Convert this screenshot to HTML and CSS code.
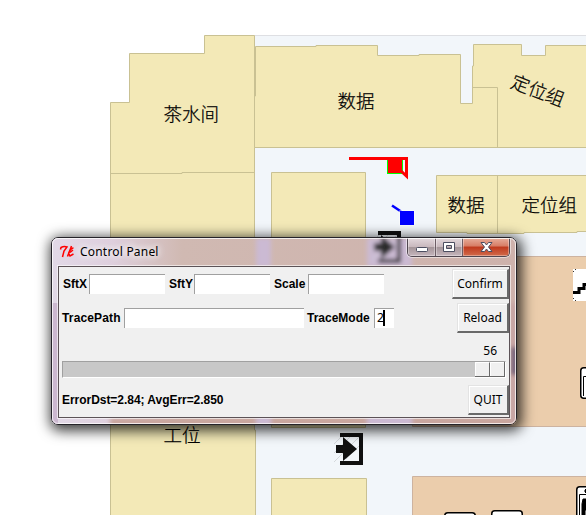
FILE: index.html
```html
<!DOCTYPE html>
<html lang="zh">
<head>
<meta charset="utf-8">
<title>Control Panel</title>
<link rel="stylesheet" href="styles.css">
</head>
<body>
<svg class="map" viewBox="0 0 586 515" width="586" height="515">
  <path class="hall" d="M254.500 35.500H590V520H254.500Z"/>
  <g class="room">
    <path d="M110.500 520V102.500H129.500V53.500H204.500V35.500H254.500V430H255.500V520Z"/>
    <path d="M110.500 173.500H182V172.500H254.500" fill="none"/>
    <path d="M254.500 147.500V96H255.500V46.500H316V45.500H377.500V55.500H419V54.500H460.500V103.500H472.500V66H473.500V44.500H521.500V55.500H545.500V45.500H590V147.500Z"/>
    <path d="M472.500 87.500H497.500V147.500" fill="none"/>
    <path d="M271.500 172.500H365.500V427.500H271.500ZM271.500 478.500H366.500V520H271.500Z"/>
    <path d="M436.500 175.500H590V231.500H577V232.500H524V233.500H467V232.500H436.500ZM497.500 175.500V233"/>
  </g>
  <path class="office" d="M412.500 256.500H590V426.500H412.500ZM412.500 476.500H590V520H412.500Z"/>
  <g class="names">
    <text x="163.500" y="120.500">茶水间</text>
    <text x="337.500" y="107.500">数据</text>
    <text x="447.500" y="211.500">数据</text>
    <text x="521.500" y="211.500">定位组</text>
    <text transform="translate(509.500 87) rotate(21)">定位组</text>
    <text x="163.500" y="441.500">工位</text>
  </g>
  <path d="M387 159H403V174H387Z" fill="#0f0"/>
  <path d="M388 159H402V173H388Z" fill="red"/>
  <path class="trace-red" d="M349 158.500H406.500V176L401 171"/>
  <path d="M392 205.500L401 211.500" stroke="#00f" stroke-width="2.500"/>
  <path d="M399.500 210.500H414.500V225.500H399.500Z" fill="#fff"/>
  <path d="M400 211H414V225H400Z" fill="#00f"/>
  <g id="door">
    <path d="M334 444L345 433M334 453L354 433M334 462L362 434M346 459L362 443" stroke="#d5d9dc"/>
    <path d="M340 433H363V465H340V461H359V437H340Z" fill="#101010"/>
    <path d="M336 445H343V437L357 449L343 461V453H336Z" fill="#101010"/>
  </g>
  <use href="#door" x="38" y="-202"/>
  <g class="fixture">
    <path d="M573 269H590V301H573Z" stroke="none"/>
    <path d="M575.500 269V270M573 271.500H574M573 298.500H574M575.500 300V301" stroke="#333"/>
    <path d="M573 292.500H579V288.500H584V284.500H590" fill="none" stroke-width="3"/>
    <rect x="580.750" y="367.750" width="20" height="30.500" rx="3"/>
    <path d="M590 376.500H583.500V396"/>
    <rect x="576.750" y="486.750" width="30" height="40" rx="3"/>
    <path d="M590 494.500H579.500V520"/>
    <path d="M584 491H590M585.500 489V493M583 499H587V510H585V516H582V504Z" fill="#000"/>
    <rect x="444.750" y="512.750" width="30.500" height="20" rx="3"/>
    <rect x="491.750" y="510.750" width="30.500" height="20" rx="3"/>
  </g>
</svg>
<main class="window">
  <svg class="glass" width="464" height="186" viewBox="52 238 464 186">
    <defs>
      <linearGradient id="g" x2="1"><stop stop-color="#e2d9e7"/><stop offset=".13" stop-color="#decfdd"/><stop offset=".28" stop-color="#d0b9b2"/><stop offset="1" stop-color="#ceb2ac"/></linearGradient>
      <filter id="b"><feGaussianBlur stdDeviation="2.200"/></filter>
    </defs>
    <path d="M52 238H516V424H52Z" fill="url(#g)"/>
    <g filter="url(#b)"><path d="M256 238H271V267H256ZM367 238H412V267H367Z" fill="#cbbad3"/><path d="M110 418H516V426H110Z" fill="#c8a49c"/><path d="M256 416H271V426H256ZM367 416H412V426H367Z" fill="#cbbad3"/><path d="M510 303H518V426H510Z" fill="#c7a5a4"/><path d="M511 347H518V375H511Z" fill="#76647b"/><use href="#door" x="38" y="-202" opacity=".85"/></g>
    <path d="M52 303H58V424H52Z" fill="#ccb8d0"/>
  </svg>
  <header class="titlebar">
    <svg class="tk" width="16" height="16" viewBox="0 0 16 16"><path d="M1.500 5.500L2 3.500Q5 2 8 3L5 7L3.500 13M12.500 2L8.500 12.500M14.500 4Q12 4 9.500 9M9.500 9L11 12L14.500 10M14 6L11 8.500" fill="none" stroke="#f00" stroke-width="1.500"/></svg>
    <span class="title">Control Panel</span>
    <div class="controls">
      <span><svg width="27" height="18" viewBox="0 0 27 18"><rect class="glyph" x="8.500" y="9.500" width="11" height="4" rx="1"/></svg></span>
      <span><svg width="26" height="18" viewBox="0 0 26 18"><path class="glyph" fill-rule="evenodd" d="M7.500 4.500H18.500V13.500H7.500ZM10.500 7.500V10.500H15.500V7.500Z"/></svg></span>
      <span class="close"><svg width="46" height="18" viewBox="0 0 46 18"><path class="glyph" d="M18 4.500H21.500L23.500 7L25.500 4.500H29L25.500 9L29 13.500H25.500L23.500 11L21.500 13.500H18L21.500 9Z"/></svg></span>
    </div>
  </header>
  <section class="client">
    <div class="row first">
      <label>SftX</label><i class="entry short"></i><label>SftY</label><i class="entry short"></i><label>Scale</label><i class="entry short"></i>
      <button class="confirm">Confirm</button>
    </div>
    <div class="row second">
      <label class="path">TracePath</label><i class="entry long"></i><label>TraceMode</label><i class="entry mode">2<b></b></i>
      <button class="reload">Reload</button>
    </div>
    <div class="value">56</div>
    <div class="slider"><i class="thumb"><b></b><b></b></i></div>
    <div class="row last"><label>ErrorDst=2.84; AvgErr=2.850</label><button class="quit">QUIT</button></div>
  </section>
</main>
</body>
</html>
```
FILE: styles.css
```css
* { box-sizing: border-box; }
body { margin: 0; width: 586px; height: 515px; overflow: hidden; position: relative; background: #fff; }
.map { display: block; }
.hall { fill: #f2f6fa; stroke: #dedfe3; }
.room { fill: #f3e9b7; stroke: #c9c193; }
.office { fill: #ebcdac; stroke: #cdb3a0; }
.names { font: 18.500px "Noto Sans CJK SC", sans-serif; font-weight: 300; fill: #000; stroke: #000; stroke-width: .25; }
.trace-red { fill: none; stroke: red; stroke-width: 3; }
.fixture { fill: #fff; stroke: #000; }
.fixture rect { stroke-width: 1.500; }
.window { position: absolute; left: 51px; top: 237px; width: 466px; height: 188px; border: 1px solid #252329; border-radius: 7px; box-shadow: 2px 3px 13px 3px rgba(0,0,0,.75); overflow: hidden; }
.window::after { content: ""; position: absolute; inset: 0; border: 1px solid rgba(255,255,255,.75); border-radius: 6px; pointer-events: none; }
.glass { position: absolute; inset: 0; }
.titlebar { position: relative; height: 28px; display: flex; align-items: flex-start; padding-left: 7px; }
.tk { margin-top: 6px; }
.title { margin: 5px 0 0 5px; font: 12px/18px "Noto Sans", sans-serif; letter-spacing: .2px; color: #000; text-shadow: 0 0 6px #fff, 0 0 9px #fff, 0 0 12px rgba(255,255,255,.8); }
.controls { margin: 0 6px 0 auto; display: flex; height: 19px; border: 1px solid #514750; border-top: 0; border-radius: 0 0 5px 5px; overflow: hidden; box-shadow: 0 0 0 1px rgba(255,255,255,.5); }
.controls span { height: 18px; background: linear-gradient(#e3d8dc, #c9b9be 48%, #a39498 50%, #c5b5bc); border-right: 1px solid #6d5d65; box-shadow: inset 0 0 0 1px rgba(255,255,255,.35); }
.controls svg { display: block; }
.controls .close { background: linear-gradient(#e7ae9c, #d77d65 45%, #bf391d 50%, #d26b4b); border: 0; }
.glyph { fill: #fff; stroke: #4c4e61; }
.client { position: relative; margin-left: 6px; width: 452px; height: 152px; background: #f0f0f0; border: 1px solid #5c5357; box-shadow: 0 0 0 1px rgba(255,255,255,.6); display: flex; flex-direction: column; }
.row { display: flex; align-items: center; }
label { font: bold 12px/16px "Liberation Sans", sans-serif; white-space: nowrap; color: #000; }
.entry { display: block; height: 20px; background: #fff; border: solid #a0a0a0; border-width: 1px 0 0 1px; font: 12px/18px "Noto Sans", sans-serif; }
.short { width: 76px; }
.first { height: 34px; padding-left: 4px; }
.first label { width: 26px; }
.first .short + label { margin-left: 4px; width: 25px; }
.first .short:nth-child(4) + label { width: 34px; }
.second { height: 34px; padding-left: 3px; }
.second label { width: 62px; }
.second .path { letter-spacing: .15px; }
.long { width: 180px; }
.long + label { margin-left: 3px; width: 67px; }
.entry.mode { width: 20px; padding-left: 2px; display: flex; }
.mode b { width: 2px; height: 16px; margin: 1px 0 0 -1px; background: #000; }
button { margin-left: auto; height: 30px; padding: 0; background: #f0f0f0; border: 2px solid; border-color: #fff #696969 #696969 #fff; border-radius: 0; font: 12px/16px "Noto Sans", sans-serif; color: #000; border-color: #e3e3e3 #696969 #696969 #e3e3e3; border-width: 1px 2px 2px 1px; box-shadow: inset 1px 1px #fff; }
.confirm { width: 57px; }
.reload { width: 52px; }
.quit { width: 41px; }
.value { height: 26px; padding: 8px 12px 0 0; text-align: right; font: 12px/16px "Noto Sans", sans-serif; }
.slider { margin-left: 3px; width: 444px; height: 17px; display: flex; justify-content: flex-end; background: #c8c8c8; border: 1px solid; border-color: #a0a0a0 #fff #fff #a0a0a0; }
.thumb { display: flex; width: 30px; height: 15px; border: solid #696969; border-width: 0 1px 1px 0; }
.thumb b { flex: 1; background: #f0f0f0; border: solid #fff; border-width: 1px 0 0 1px; }
.thumb b:first-child { border-right: 1px solid #696969; }
.last { flex: 1; padding: 0 0 0 3px; align-items: flex-start; }
.last label { margin-top: 14px; letter-spacing: -.04px; }
.last button { margin-top: 7px; }
```
